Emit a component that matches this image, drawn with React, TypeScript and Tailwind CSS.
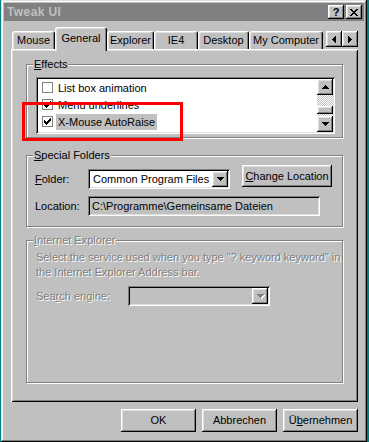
import React from 'react';

const raised =
  'shadow-[inset_-1px_-1px_#000,inset_1px_1px_#fff,inset_-2px_-2px_#808080,inset_2px_2px_#dfdfdf]';
const sunken =
  'shadow-[inset_1px_1px_#808080,inset_-1px_-1px_#fff,inset_2px_2px_#000,inset_-2px_-2px_#dfdfdf]';

const ARROW_DOWN = ['XXXXXXX', '.XXXXX.', '..XXX..', '...X...'];
const ARROW_UP = ['...X...', '..XXX..', '.XXXXX.', 'XXXXXXX'];
const ARROW_LEFT = ['...X', '..XX', '.XXX', 'XXXX', '.XXX', '..XX', '...X'];
const ARROW_RIGHT = ['X...', 'XX..', 'XXX.', 'XXXX', 'XXX.', 'XX..', 'X...'];
const CLOSE = ['XX....XX', '.XX..XX.', '..XXXX..', '...XX...', '..XXXX..', '.XX..XX.', 'XX....XX'];
const CHECK = ['......X', '.....XX', 'X...XXX', 'XX.XXX.', 'XXXXX..', '.XXX...', '..X....'];

function Px({ rows, color = '#000' }: { rows: string[]; color?: string }) {
  const w = rows[0].length;
  const h = rows.length;
  return (
    <svg width={w} height={h} viewBox={`0 0 ${w} ${h}`} shapeRendering="crispEdges" className="block">
      {rows.flatMap((r, y) =>
        r.split('').map((c, x) =>
          c === 'X' ? <rect key={`${x}-${y}`} x={x} y={y} width={1} height={1} fill={color} /> : null
        )
      )}
    </svg>
  );
}

function SmallBtn({ rows, className = '', disabled }: { rows: string[]; className?: string; disabled?: boolean }) {
  return (
    <div className={`flex items-center justify-center bg-[#c0c0c0] ${raised} ${className}`}>
      {disabled ? (
        <div className="[filter:drop-shadow(1px_1px_0_#fff)]">
          <Px rows={rows} color="#808080" />
        </div>
      ) : (
        <Px rows={rows} />
      )}
    </div>
  );
}

function Tab({ label, w, selected }: { label: string; w: number; selected?: boolean }) {
  return (
    <div
      style={{ width: w }}
      className={`flex items-center justify-center bg-[#c0c0c0] border-t border-l border-r border-t-white border-l-white border-r-black rounded-t-[3px] shadow-[inset_-1px_0_#808080,inset_1px_1px_#dfdfdf] ${
        selected ? 'h-[24px] -mb-[2px] relative z-10 pb-[3px]' : 'h-[18px]'
      }`}
    >
      {label}
    </div>
  );
}

function Group({
  label,
  className = '',
  disabled,
  children,
}: {
  label: React.ReactNode;
  className?: string;
  disabled?: boolean;
  children?: React.ReactNode;
}) {
  return (
    <div className={`relative border border-[#808080] shadow-[inset_1px_1px_#fff,1px_1px_#fff] ${className}`}>
      <span
        className={`absolute -top-[8px] left-[6px] px-[1px] bg-[#c0c0c0] leading-[14px] ${
          disabled ? 'text-[#808080] [text-shadow:1px_1px_0_#fff]' : ''
        }`}
      >
        {label}
      </span>
      {children}
    </div>
  );
}

function CheckItem({ label, checked, selected }: { label?: string; checked?: boolean; selected?: boolean }) {
  return (
    <div className="flex items-center h-[17px] pl-[4px] whitespace-nowrap">
      <div className="w-[11px] h-[11px] border border-[#808080] bg-white flex items-center justify-center">
        {checked && <Px rows={CHECK} />}
      </div>
      {label && (
        <span className={`ml-[3px] px-[2px] leading-[16px] ${selected ? 'bg-[#c0c0c0]' : ''}`}>{label}</span>
      )}
    </div>
  );
}

function Combo({ value, disabled, h = 20 }: { value?: string; disabled?: boolean; h?: number }) {
  return (
    <div
      style={{ height: h }}
      className={`w-[142px] flex items-center p-[2px] ${sunken} ${disabled ? 'bg-[#c0c0c0]' : 'bg-white'}`}
    >
      <span className="flex-1 pl-[3px] whitespace-nowrap overflow-hidden">{value}</span>
      <SmallBtn rows={ARROW_DOWN} disabled={disabled} className="w-[16px] h-full" />
    </div>
  );
}

function PushBtn({ children }: { children: React.ReactNode }) {
  return (
    <div className={`w-[75px] h-[23px] flex items-center justify-center bg-[#c0c0c0] ${raised}`}>{children}</div>
  );
}

export default function App() {
  return (
    <div className="relative w-[369px] h-[442px] bg-[#008080] overflow-hidden font-['Liberation_Sans',Arial,sans-serif] text-[11px] text-black">
      <div className="ml-[1px] w-[366px] h-[442px] bg-[#c0c0c0] p-[3px] shadow-[inset_-1px_-1px_#000,inset_1px_1px_#dfdfdf,inset_-2px_-2px_#808080,inset_2px_2px_#fff]">
        {/* title bar */}
        <div className="h-[18px] bg-[#808080] flex items-center pl-[3px] pr-[2px]">
          <span className="font-bold text-[#c0c0c0] text-[12px] tracking-[0.4px]">Tweak UI</span>
          <div className="ml-auto flex gap-[2px]">
            <div className={`w-[16px] h-[14px] flex items-center justify-center bg-[#c0c0c0] font-bold leading-none ${raised}`}>
              ?
            </div>
            <SmallBtn rows={CLOSE} className="w-[16px] h-[14px]" />
          </div>
        </div>

        <div className="ml-[7px] w-[347px]">
          {/* tabs */}
          <div className="flex items-end h-[22px] mt-[6px] pl-[1px]">
            <Tab label="Mouse" w={43} />
            <Tab label="General" w={52} selected />
            <Tab label="Explorer" w={47} />
            <Tab label="IE4" w={44} />
            <Tab label="Desktop" w={51} />
            <Tab label="My Computer" w={74} />
            <div className="ml-auto flex mb-[2px]">
              <SmallBtn rows={ARROW_LEFT} className="w-[16px] h-[16px]" />
              <SmallBtn rows={ARROW_RIGHT} className="w-[16px] h-[16px]" />
            </div>
          </div>

          {/* panel */}
          <div className="h-[353px] pt-[15px] pl-[15px] shadow-[inset_1px_1px_#fff,inset_-1px_-1px_#000,inset_2px_2px_#dfdfdf,inset_-2px_-2px_#808080]">
            <Group
              className="w-[317px] h-[74px]"
              label={
                <>
                  <u>E</u>ffects
                </>
              }
            >
              <div className={`ml-[9px] mt-[12px] w-[299px] h-[57px] bg-white p-[2px] flex ${sunken}`}>
                <div className="flex-1 overflow-hidden">
                  <CheckItem label="List box animation" />
                  <CheckItem label="Menu underlines" checked />
                  <CheckItem label="X-Mouse AutoRaise" checked selected />
                  <CheckItem />
                </div>
                <div className="w-[16px] flex flex-col">
                  <SmallBtn rows={ARROW_UP} className="w-[16px] h-[16px]" />
                  <div className="h-[11px] bg-[repeating-conic-gradient(#c0c0c0_0_25%,#fff_0_50%)] bg-[length:2px_2px]" />
                  <div className={`h-[8px] bg-[#c0c0c0] ${raised}`} />
                  <div className="flex-1 bg-[repeating-conic-gradient(#c0c0c0_0_25%,#fff_0_50%)] bg-[length:2px_2px]" />
                  <SmallBtn rows={ARROW_DOWN} className="w-[16px] h-[16px]" />
                </div>
              </div>
            </Group>

            <Group
              className="w-[317px] h-[72px] mt-[17px]"
              label={
                <>
                  <u>S</u>pecial Folders
                </>
              }
            >
              <div className="flex items-start mt-[9px] pl-[8px]">
                <div className="w-[53px] h-[20px] mt-[4px] flex items-center">
                  <span>
                    <u>F</u>older:
                  </span>
                </div>
                <div className="mt-[4px]">
                  <Combo value="Common Program Files" />
                </div>
                <div className={`ml-[12px] w-[90px] h-[22px] flex items-center justify-center bg-[#c0c0c0] ${raised}`}>
                  <span>
                    <u>C</u>hange Location
                  </span>
                </div>
              </div>
              <div className="flex items-center mt-[7px] pl-[8px]">
                <div className="w-[53px]">Location:</div>
                <div className={`w-[232px] h-[20px] flex items-center pl-[4px] bg-[#c0c0c0] whitespace-nowrap ${sunken}`}>
                  C:\Programme\Gemeinsame Dateien
                </div>
              </div>
            </Group>

            <Group
              disabled
              className="w-[317px] h-[143px] mt-[13px]"
              label={
                <>
                  <u>I</u>nternet Explorer
                </>
              }
            >
              <div className="pl-[9px] mt-[9px] leading-[15px] whitespace-nowrap text-[#808080] [text-shadow:1px_1px_0_#fff]">
                Select the service used when you type "? keyword keyword" in
                <br />
                the Internet Explorer Address bar.
              </div>
              <div className="flex items-center mt-[6px] pl-[9px]">
                <div className="w-[92px] text-[#808080] [text-shadow:1px_1px_0_#fff]">
                  Sea<u>r</u>ch engine:
                </div>
                <Combo disabled />
              </div>
            </Group>
          </div>
        </div>

        {/* dialog buttons */}
        <div className="flex justify-end gap-[6px] mt-[7px] mr-[6px]">
          <PushBtn>OK</PushBtn>
          <PushBtn>Abbrechen</PushBtn>
          <PushBtn>
            <span>
              Ü<u>b</u>ernehmen
            </span>
          </PushBtn>
        </div>
      </div>

      {/* red highlight rectangle drawn over the screenshot */}
      <div className="absolute left-[22px] top-[102px] w-[161px] h-[39px] border-[3px] border-[#ff0000] pointer-events-none" />
    </div>
  );
}
